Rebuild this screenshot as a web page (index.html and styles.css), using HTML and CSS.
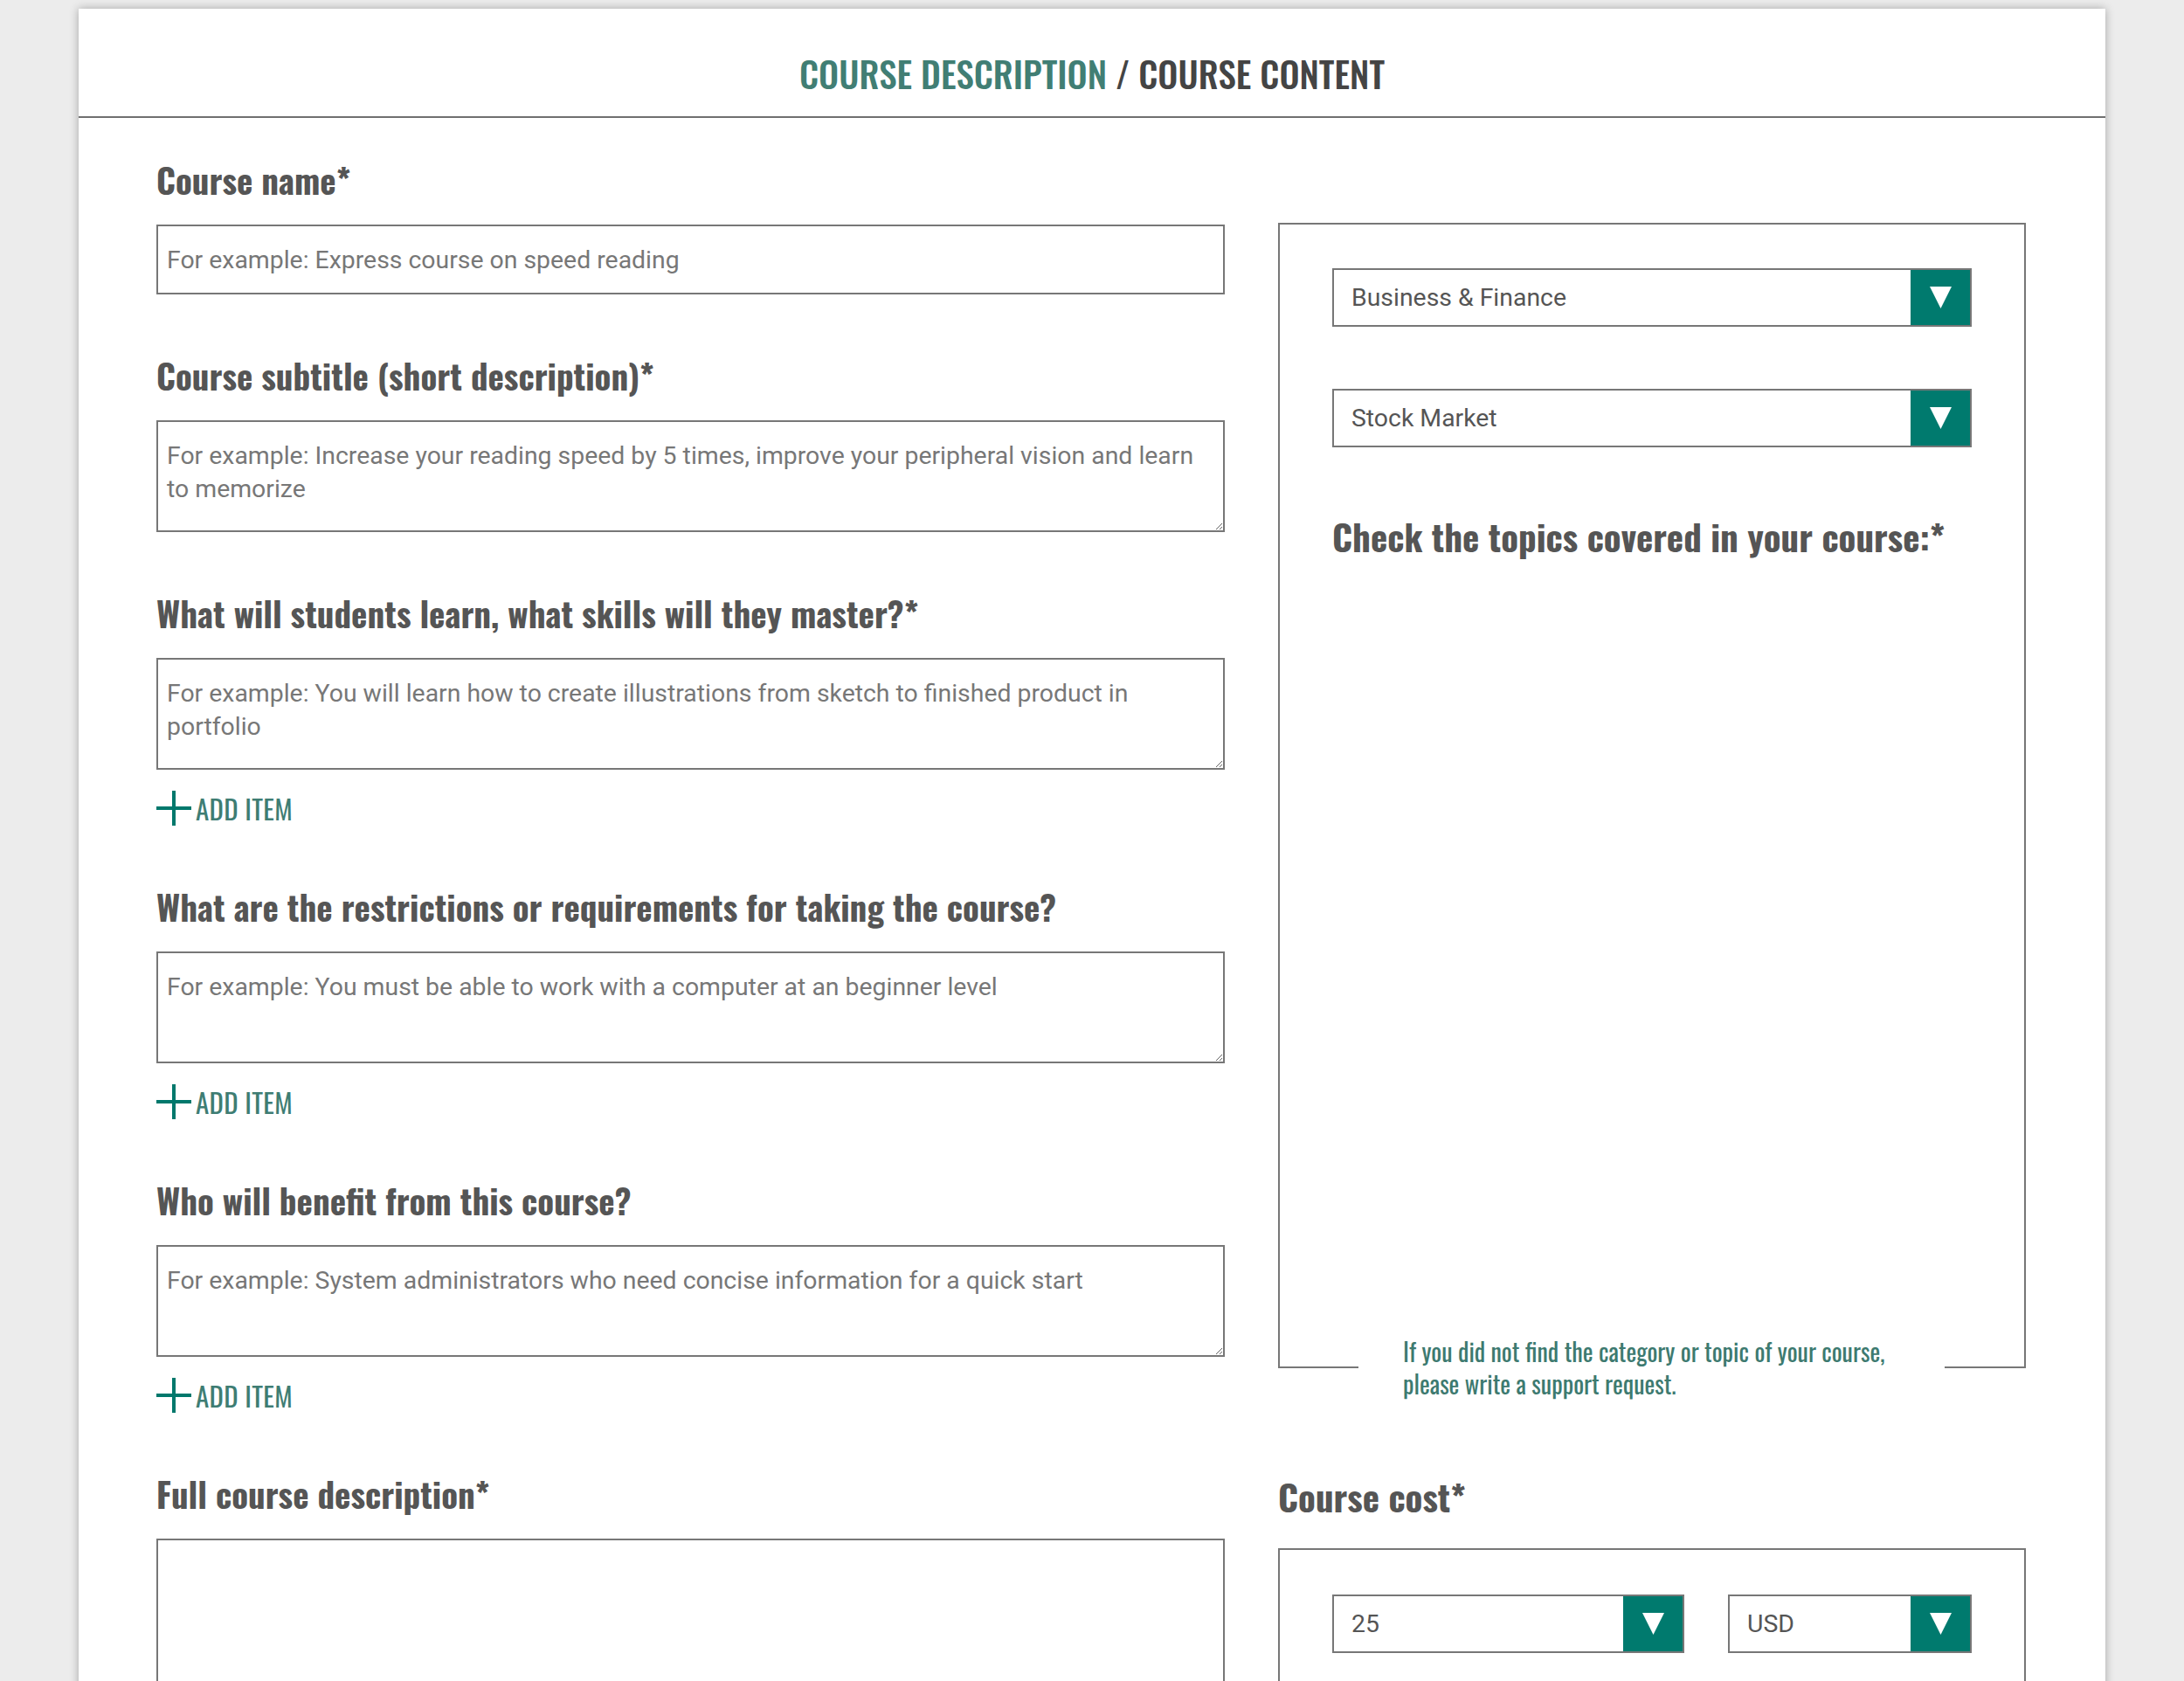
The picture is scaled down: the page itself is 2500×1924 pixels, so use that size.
FILE: index.html
```html
<!DOCTYPE html>
<html lang="en">
<head>
  <meta charset="UTF-8">
  <meta name="viewport" content="width=device-width, initial-scale=1.0">
  <title>Course description</title>
  <link rel="stylesheet" href="styles.css">
</head>
<body>
  <div class="card">
    <header class="card-header">
      <h1 class="title"><span class="title-active">Course description</span> / Course content</h1>
    </header>

    <div class="form-grid">
      <div class="form-main">
        <div class="field">
          <label class="field-label" for="name">Course name*</label>
          <input class="text-input" id="name" type="text" placeholder="For example: Express course on speed reading">
        </div>

        <div class="field">
          <label class="field-label" for="subtitle">Course subtitle (short description)*</label>
          <textarea class="text-area" id="subtitle" placeholder="For example: Increase your reading speed by 5 times, improve your peripheral vision and learn to memorize"></textarea>
        </div>

        <div class="field">
          <label class="field-label" for="learn">What will students learn, what skills will they master?*</label>
          <textarea class="text-area" id="learn" placeholder="For example: You will learn how to create illustrations from sketch to finished product in portfolio"></textarea>
          <a class="add-item" href="#">
            <svg width="40" height="40" viewBox="0 0 40 40"><path d="M0 20H40M20 0V40" stroke="#00786c" stroke-width="4"/></svg>
            <span>Add item</span>
          </a>
        </div>

        <div class="field">
          <label class="field-label" for="req">What are the restrictions or requirements for taking the course?</label>
          <textarea class="text-area" id="req" placeholder="For example: You must be able to work with a computer at an beginner level"></textarea>
          <a class="add-item" href="#">
            <svg width="40" height="40" viewBox="0 0 40 40"><path d="M0 20H40M20 0V40" stroke="#00786c" stroke-width="4"/></svg>
            <span>Add item</span>
          </a>
        </div>

        <div class="field">
          <label class="field-label" for="who">Who will benefit from this course?</label>
          <textarea class="text-area" id="who" placeholder="For example: System administrators who need concise information for a quick start"></textarea>
          <a class="add-item" href="#">
            <svg width="40" height="40" viewBox="0 0 40 40"><path d="M0 20H40M20 0V40" stroke="#00786c" stroke-width="4"/></svg>
            <span>Add item</span>
          </a>
        </div>

        <div class="field">
          <label class="field-label" for="full">Full course description*</label>
          <textarea class="text-area text-area-big" id="full"></textarea>
        </div>
      </div>

      <aside class="form-side">
        <div class="category-box">
          <div class="select">
            <span class="select-value">Business &amp; Finance</span>
            <span class="select-arrow"><svg width="25" height="25" viewBox="0 0 26 26"><path d="M0 0H26L13 26Z" fill="#fff"/></svg></span>
          </div>
          <div class="select">
            <span class="select-value">Stock Market</span>
            <span class="select-arrow"><svg width="25" height="25" viewBox="0 0 26 26"><path d="M0 0H26L13 26Z" fill="#fff"/></svg></span>
          </div>
          <h3 class="side-label topics-label">Check the topics covered in your course:*</h3>
          <p class="support-note">If you did not find the category or topic of your course,<br>please write a support request.</p>
        </div>

        <h3 class="side-label cost-label">Course cost*</h3>
        <div class="cost-box">
          <div class="select">
            <span class="select-value">25</span>
            <span class="select-arrow"><svg width="25" height="25" viewBox="0 0 26 26"><path d="M0 0H26L13 26Z" fill="#fff"/></svg></span>
          </div>
          <div class="select">
            <span class="select-value">USD</span>
            <span class="select-arrow"><svg width="25" height="25" viewBox="0 0 26 26"><path d="M0 0H26L13 26Z" fill="#fff"/></svg></span>
          </div>
        </div>
      </aside>
    </div>
  </div>
</body>
</html>
```

FILE: styles.css
```css
body {
  margin: 0;
  background-color: #ececec;
  font-family: Roboto, "Liberation Sans", sans-serif;
  color: #555;
}
.card {
  width: 2320px;
  margin: 10px auto 0;
  background-color: #fff;
  box-shadow: 0 0 10px rgba(0, 0, 0, 0.3);
  padding-bottom: 120px;
}
.card-header {
  padding: 49px 0 24px;
  border-bottom: 2px solid #707070;
  text-align: center;
}
.title {
  margin: 0;
  font-family: Oswald, "Roboto Condensed", sans-serif;
  font-weight: 500;
  font-size: 41px;
  line-height: 50px;
  text-transform: uppercase;
  color: #444;
}
.title-active {
  color: #417e74;
}
.form-grid {
  display: grid;
  grid-template-columns: 1223px 856px;
  column-gap: 61px;
  padding: 0 91px 0 89px;
  align-items: start;
}
.form-main {
  padding-top: 45px;
}
.field {
  display: flex;
  flex-direction: column;
}
.field + .field {
  margin-top: 67px;
}
.field-label {
  display: block;
  margin: 0 0 27px;
  font-family: Oswald, "Roboto Condensed", sans-serif;
  font-weight: 700;
  font-size: 39px;
  line-height: 50px;
  color: #555;
}
.text-input,
.text-area {
  box-sizing: border-box;
  width: 100%;
  margin: 0;
  border: 2px solid #777;
  border-radius: 0;
  font-family: Roboto, "Liberation Sans", sans-serif;
  font-size: 28.4px;
  color: #555;
  outline: none;
}
.text-input {
  height: 80px;
  padding: 0 10px;
}
.text-area {
  height: 128px;
  padding: 20px 10px;
  line-height: 38px;
}
.text-area-big {
  height: 420px;
  resize: none;
}
.text-input::placeholder,
.text-area::placeholder {
  color: #777;
  opacity: 1;
}
.add-item {
  display: flex;
  align-items: center;
  gap: 5px;
  margin-top: 24px;
  align-self: flex-start;
  font-family: Oswald, "Roboto Condensed", sans-serif;
  font-weight: 400;
  font-size: 31px;
  line-height: 40px;
  letter-spacing: 0.3px;
  text-transform: uppercase;
  text-decoration: none;
  color: #3e7d73;
}
.add-item svg {
  display: block;
}
.form-side {
  padding-top: 120px;
}
.category-box {
  position: relative;
  box-sizing: border-box;
  height: 1311px;
  padding: 50px 60px 0;
  border: 2px solid #777;
}
.select {
  box-sizing: border-box;
  display: flex;
  height: 67px;
  border: 2px solid #777;
  background-color: #fff;
}
.category-box .select + .select {
  margin-top: 71px;
}
.select-value {
  flex: 1;
  display: flex;
  align-items: center;
  padding-left: 20px;
  font-size: 28.4px;
  color: #555;
}
.select-arrow {
  width: 68px;
  display: flex;
  align-items: center;
  justify-content: center;
  background-color: #007a6e;
}
.select-arrow svg {
  display: block;
}
.side-label {
  font-family: Oswald, "Roboto Condensed", sans-serif;
  font-weight: 700;
  font-size: 41px;
  line-height: 54px;
  color: #555;
  white-space: nowrap;
}
.topics-label {
  margin: 75px 0 0;
}
.support-note {
  position: absolute;
  left: 90px;
  bottom: -38px;
  width: 671px;
  box-sizing: border-box;
  margin: 0;
  padding: 0 40px 0 51px;
  background-color: #fff;
  font-family: Oswald, "Roboto Condensed", sans-serif;
  font-weight: 400;
  font-size: 28px;
  line-height: 37px;
  color: #3d7a70;
}
.cost-label {
  margin: 120px 0 32px;
}
.cost-box {
  display: grid;
  grid-template-columns: 403px 279px;
  column-gap: 50px;
  padding: 51px 60px 200px;
  border: 2px solid #777;
}
```
